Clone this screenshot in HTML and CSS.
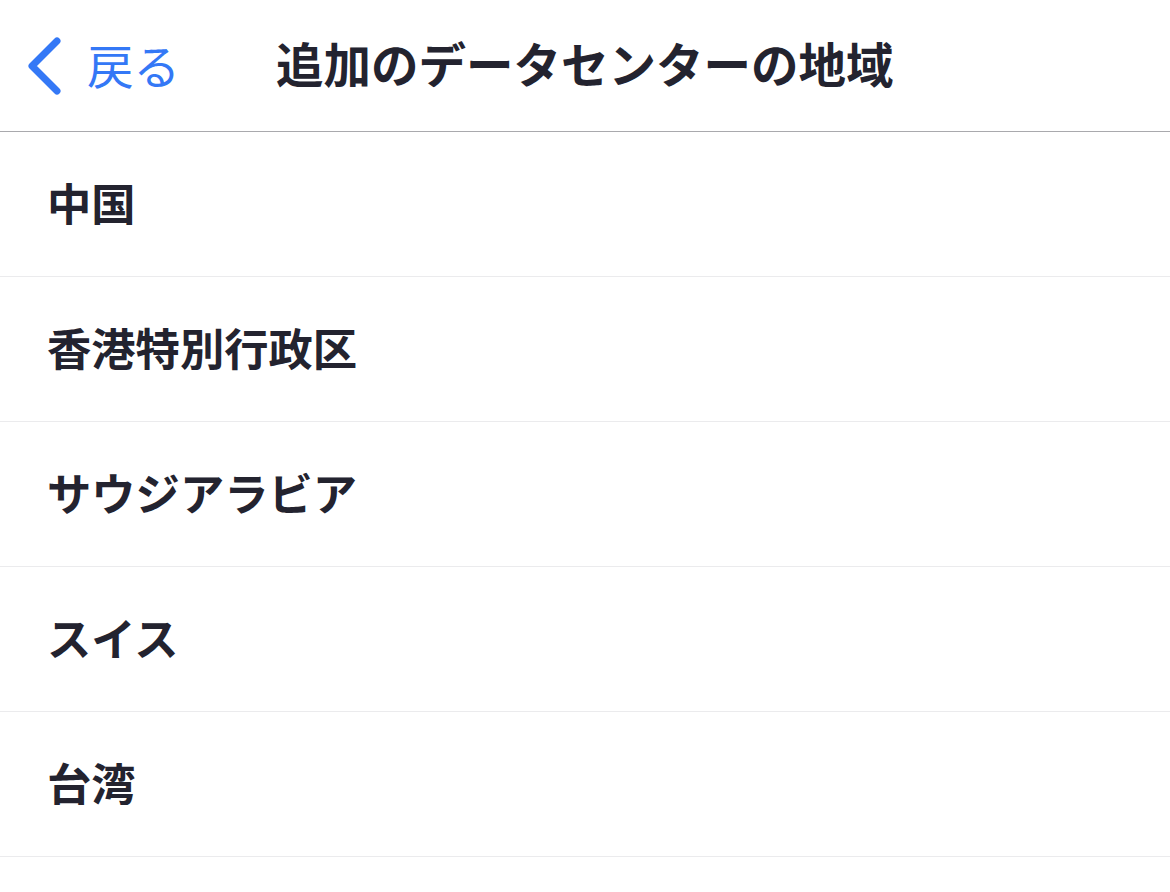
FILE: index.html
```html
<!DOCTYPE html>
<html lang="ja">
<head>
  <meta charset="UTF-8">
  <meta name="viewport" content="width=device-width, initial-scale=1">
  <title>追加のデータセンターの地域</title>
  <link rel="stylesheet" href="styles.css">
</head>
<body>

  <header class="nav-bar">
    <a class="back-link" href="#">
      <svg class="back-chevron" width="40" height="64" viewBox="0 0 40 64">
        <polyline points="33,7 8,32 33,57" fill="none" stroke="#3478f6" stroke-width="7" stroke-linecap="round" stroke-linejoin="round"/>
      </svg>
      <span class="back-label">戻る</span>
    </a>
    <h1 class="nav-title">追加のデータセンターの地域</h1>
  </header>

  <ul class="region-list">
    <li class="region-item">中国</li>
    <li class="region-item">香港特別行政区</li>
    <li class="region-item">サウジアラビア</li>
    <li class="region-item">スイス</li>
    <li class="region-item">台湾</li>
  </ul>

</body>
</html>
```

FILE: styles.css
```css
body {
  margin: 0;
  background: #fff;
  font-family: "Noto Sans CJK JP", "Noto Sans", sans-serif;
  color: #23232f;
}

.nav-bar {
  display: flex;
  align-items: center;
  height: 131px;
  border-bottom: 1px solid #a9a9ad;
  padding-left: 24px;
}

.back-link {
  display: flex;
  align-items: center;
  text-decoration: none;
  color: #3478f6;
}

.back-label {
  font-size: 46.5px;
  font-weight: 400;
  margin: 0 0 5px 23px;
}

.nav-title {
  margin: 0 0 6px 96px;
  font-size: 47.5px;
  font-weight: 700;
}

.region-list {
  list-style: none;
  margin: 0;
  padding: 0;
}

.region-item {
  display: flex;
  align-items: center;
  box-sizing: border-box;
  height: 145px;
  padding: 0 0 4px 47px;
  border-bottom: 1px solid #ebebed;
  font-size: 44.3px;
  font-weight: 700;
}
```
